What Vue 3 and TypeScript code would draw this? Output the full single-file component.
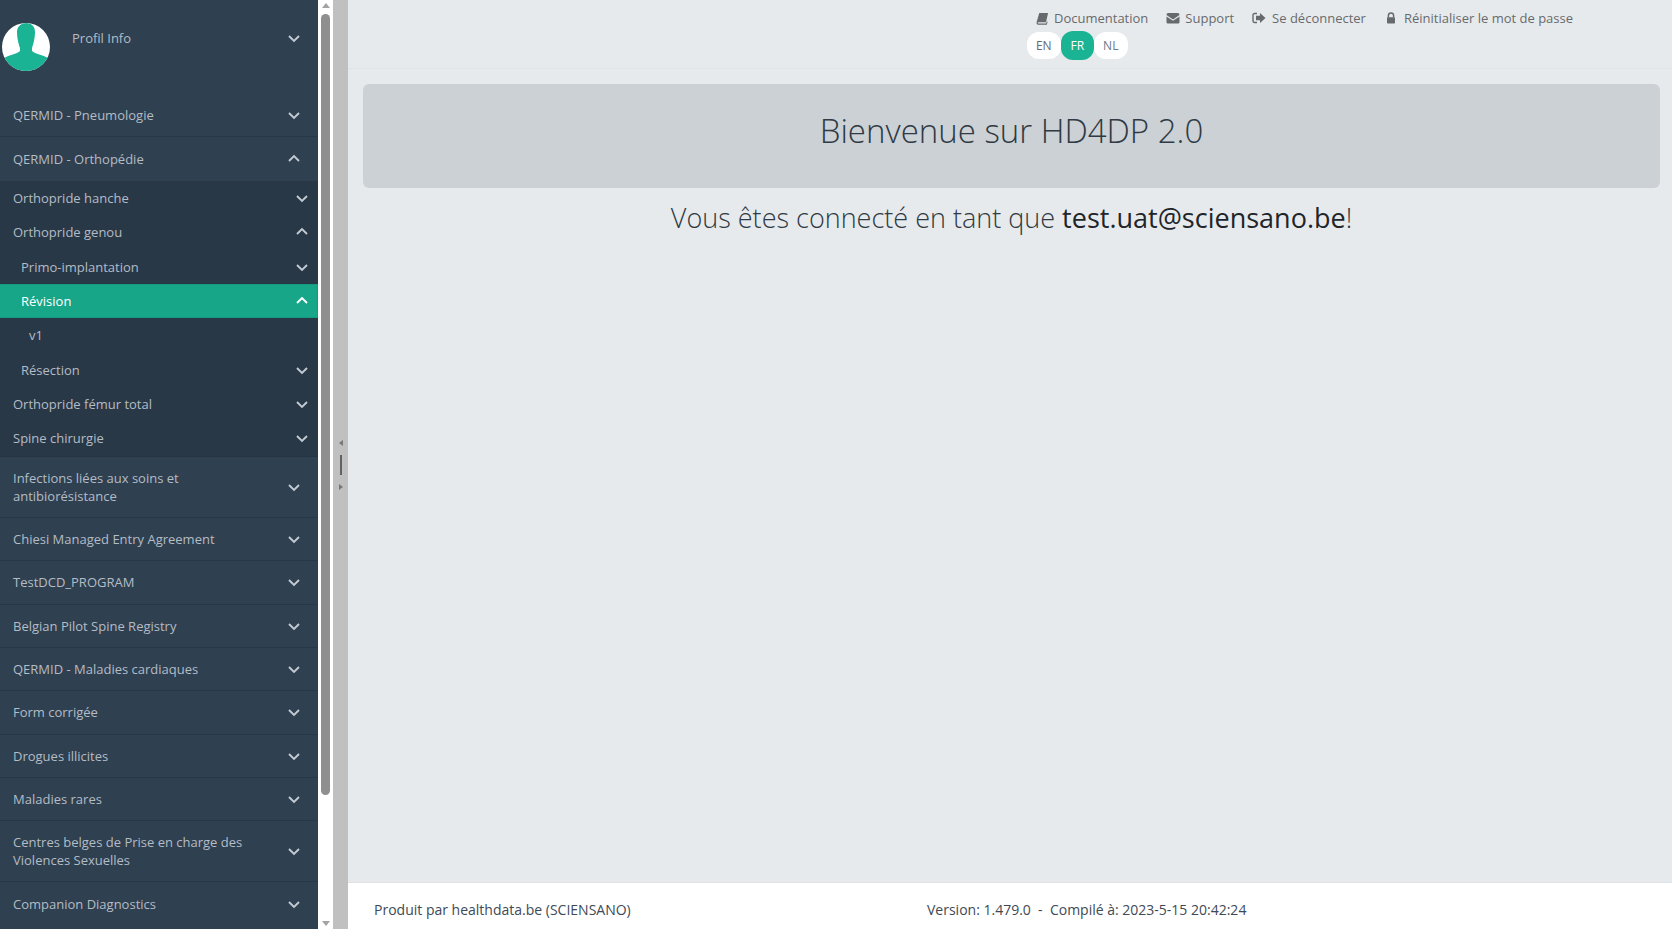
<script setup lang="ts">
type Item = { label: string; level: 0 | 1 | 2 | 3; icon?: 'down' | 'up'; active?: boolean; open?: boolean; last?: boolean }
const before: Item[] = [
  { label: 'QERMID - Pneumologie', level: 0, icon: 'down' },
  { label: 'QERMID - Orthopédie', level: 0, icon: 'up', open: true },
]
const sub: Item[] = [
  { label: 'Orthopride hanche', level: 1, icon: 'down' },
  { label: 'Orthopride genou', level: 1, icon: 'up' },
  { label: 'Primo-implantation', level: 2, icon: 'down' },
  { label: 'Révision', level: 2, icon: 'up', active: true },
  { label: 'v1', level: 3 },
  { label: 'Résection', level: 2, icon: 'down' },
  { label: 'Orthopride fémur total', level: 1, icon: 'down' },
  { label: 'Spine chirurgie', level: 1, icon: 'down' },
]
const after: string[] = [
  'Infections liées aux soins et antibiorésistance',
  'Chiesi Managed Entry Agreement',
  'TestDCD_PROGRAM',
  'Belgian Pilot Spine Registry',
  'QERMID - Maladies cardiaques',
  'Form corrigée',
  'Drogues illicites',
  'Maladies rares',
  'Centres belges de Prise en charge des Violences Sexuelles',
  'Companion Diagnostics',
]
const chevron = (dir?: string) => (dir === 'up' ? 'M2 9 L7 4 L12 9' : 'M2 5 L7 10 L12 5')
</script>

<template>
  <div class="page">
    <aside class="sidebar">
      <div class="profile">
        <svg class="avatar" viewBox="0 0 48 48" width="48" height="48">
          <circle cx="24" cy="24" r="24" fill="#fff" />
          <clipPath id="av"><circle cx="24" cy="24" r="24" /></clipPath>
          <g clip-path="url(#av)" fill="#1ab394">
            <path d="M15 9 C15 3 20 0 24 0 C29 0 33 3 33 9 C33 16 31 22 30 25 L30 28 C33 31 41 32 46 35 L48 48 L0 48 L2 35 C7 32 15 31 18 28 L18 25 C17 22 15 16 15 9 Z" />
          </g>
        </svg>
        <span class="profile-name">Profil Info</span>
        <svg class="chev top" viewBox="0 0 14 14" width="14" height="14"><path :d="chevron('down')" /></svg>
      </div>

      <nav class="menu">
        <a v-for="it in before" :key="it.label" class="top-item" :class="{ open: it.open }">
          <span class="label">{{ it.label }}</span>
          <svg class="chev top" viewBox="0 0 14 14" width="14" height="14"><path :d="chevron(it.icon)" /></svg>
        </a>
        <div class="sub">
          <a
            v-for="it in sub"
            :key="it.label"
            class="sub-item"
            :class="['lvl' + it.level, { active: it.active }]"
          >
            <span class="label">{{ it.label }}</span>
            <svg v-if="it.icon" class="chev" viewBox="0 0 14 14" width="14" height="14"><path :d="chevron(it.icon)" /></svg>
          </a>
        </div>
        <a v-for="label in after" :key="label" class="top-item">
          <span class="label">{{ label }}</span>
          <svg class="chev top" viewBox="0 0 14 14" width="14" height="14"><path :d="chevron('down')" /></svg>
        </a>
      </nav>
    </aside>

    <div class="scrollbar">
      <span class="arrow up"></span>
      <span class="thumb"></span>
      <span class="arrow down"></span>
    </div>

    <div class="splitter">
      <span class="tri left"></span>
      <span class="grip"></span>
      <span class="tri right"></span>
    </div>

    <main class="main">
      <header class="topbar">
        <div class="topbar-inner">
          <div class="links">
            <a class="link">
              <svg viewBox="0 0 14 14" width="13" height="13"><path d="M3.5 1 H13 L10.8 11 H2.6 C1.6 11 1.6 12.4 2.6 12.4 H11 L11.6 10.2 L12.6 10.6 L11.6 13.6 H2 C0.6 13.6 0.4 12 0.8 10.6 Z" fill="#676a6c" /></svg>
              Documentation
            </a>
            <a class="link">
              <svg viewBox="0 0 14 14" width="14" height="14"><path d="M0.5 4 C0.5 2.8 1.2 2 2.2 2 H11.8 C12.8 2 13.5 2.8 13.5 4 L7 8.4 Z M0.5 5.4 L7 9.8 L13.5 5.4 V11 C13.5 12 12.8 12.6 11.8 12.6 H2.2 C1.2 12.6 0.5 12 0.5 11 Z" fill="#676a6c" /></svg>
              Support
            </a>
            <a class="link nudge">
              <svg viewBox="0 0 14 14" width="14" height="14"><path d="M5 2.5 H2.4 C1.6 2.5 1 3.1 1 3.9 V10.1 C1 10.9 1.6 11.5 2.4 11.5 H5" fill="none" stroke="#676a6c" stroke-width="1.4" /><path d="M8 2 L13.5 7 L8 12 V9.2 H4 V4.8 H8 Z" fill="#676a6c" /></svg>
              Se déconnecter
            </a>
            <a class="link nudge">
              <svg viewBox="0 0 14 14" width="14" height="14"><path d="M4.4 6.4 V4.6 C4.4 3 5.5 2 7 2 C8.5 2 9.6 3 9.6 4.6 V6.4" fill="none" stroke="#676a6c" stroke-width="1.5" /><rect x="3" y="6.2" width="8" height="6.3" rx="0.8" fill="#676a6c" /></svg>
              Réinitialiser le mot de passe
            </a>
          </div>
          <div class="langs">
            <span class="lang">EN</span>
            <span class="lang on">FR</span>
            <span class="lang nl">NL</span>
          </div>
        </div>
      </header>

      <section class="content">
        <div class="jumbotron"><h1>Bienvenue sur HD4DP 2.0</h1></div>
        <h2>Vous êtes connecté en tant que <strong>test.uat@sciensano.be</strong>!</h2>
      </section>

      <footer class="footer">
        <span class="produced">Produit par healthdata.be (SCIENSANO)</span>
        <span>Version: 1.479.0 &nbsp;-&nbsp; Compilé à: 2023-5-15 20:42:24</span>
      </footer>
    </main>
  </div>
</template>

<style>
html, body { margin: 0; overflow: hidden; }
</style>

<style scoped>
.page {
  display: flex;
  height: 929px;
  overflow: hidden;
  font-family: "Open Sans", "Liberation Sans", sans-serif;
  font-size: 13px;
  color: #676a6c;
  background: #e7eaec;
}
.sidebar {
  width: 318px;
  flex: none;
  height: 929px;
  overflow: hidden;
  background: #2f4050;
  color: #b4bcc6;
}
.profile {
  display: flex;
  align-items: center;
  height: 94px;
  padding: 0 17px 0 2px;
  box-sizing: border-box;
  position: relative;
}
.avatar { flex: none; margin-top: -4px; margin-top: -1px; }
.profile-name { flex: 1; margin-left: 22px; margin-top: -18px; }
.profile .chev { margin-top: -18px; }
.chev {
  flex: none;
  fill: none;
  stroke: #c3cad2;
  stroke-width: 1.9;
}
.menu { display: flex; flex-direction: column; }
.top-item {
  display: flex;
  align-items: center;
  justify-content: space-between;
  padding: 12.17px 17px 12.16px 13px;
  line-height: 18px;
  border-bottom: 1px solid #293846;
}
.top-item.open { border-bottom: none; padding-bottom: 12.66px; padding-top: 12.66px; }
.top-item:last-child { border-bottom: none; }
.label { flex: 1; padding-right: 20px; }
.sub { background: #293846; border-bottom: 1px solid #263340; }
.sub-item {
  display: flex;
  align-items: center;
  padding: 8.2px 9px 8.2px 13px;
  line-height: 18px;
}
.sub-item.lvl2 { padding-left: 21px; }
.sub-item.lvl3 { padding-left: 29px; }
.sub-item.active {
  background: #18a689;
  color: #fff;
  border: 1px solid #149a7e;
  border-width: 1px 1px 1px 0;
  padding-top: 7.2px;
  padding-bottom: 7.2px;
  padding-right: 8px;
}
.sub-item.active .chev { stroke: #fff; }
.scrollbar {
  width: 15px;
  flex: none;
  background: #fff;
  display: flex;
  flex-direction: column;
  align-items: center;
}
.arrow { width: 0; height: 0; border-left: 4px solid transparent; border-right: 4px solid transparent; }
.arrow.up { margin-top: 3px; border-bottom: 5px solid #a3a3a3; }
.arrow.down { margin-top: auto; margin-bottom: 3px; border-top: 5px solid #a3a3a3; }
.thumb {
  width: 9px;
  height: 781px;
  margin-top: 6px;
  background: #8f8f8f;
  border-radius: 5px;
}
.splitter {
  width: 15px;
  flex: none;
  background: #c0c0c0;
  display: flex;
  flex-direction: column;
  align-items: center;
  justify-content: center;
  padding-top: 1px;
  box-sizing: border-box;
}
.grip { width: 2px; height: 20px; background: #5f6368; margin: 9px 0; }
.tri { width: 0; height: 0; border-top: 3px solid transparent; border-bottom: 3px solid transparent; }
.tri.left { border-right: 4px solid #777; }
.tri.right { border-left: 4px solid #777; }
.main {
  flex: 1;
  min-width: 0;
  display: flex;
  flex-direction: column;
}
.topbar {
  height: 69px;
  box-sizing: border-box;
  border-bottom: 1px solid #dfe3e6;
  display: flex;
  justify-content: flex-end;
  padding-right: 101px;
}
.topbar-inner { width: 544px; }
.links {
  display: flex;
  height: 32px;
  padding: 0 0 0 9px;
  align-items: center;
  gap: 18px;
  color: #676a6c;
  line-height: 18px;
  padding-top: 4px;
  box-sizing: border-box;
}
.link { display: inline-flex; align-items: center; gap: 5px; white-space: nowrap; }
.link.nudge { gap: 6px; }
.langs { display: flex; }
.lang {
  width: 33.5px;
  height: 27px;
  border-radius: 12px;
  background: #fff;
  display: flex;
  align-items: center;
  justify-content: center;
  font-size: 12px;
  color: #676a6c;
}
.lang.on { background: #1ab394; color: #fff; height: 29px; margin-top: -1px; }
.lang.nl { color: #6b7c8c; }
.content {
  flex: 1;
  padding: 15px 12px 0 15px;
  text-align: center;
}
.jumbotron {
  height: 104px;
  background: #ccd1d5;
  border-radius: 6px;
  box-sizing: border-box;
  padding-top: 24px;
}
h1 {
  margin: 0;
  font-size: 33px;
  line-height: 45px;
  font-weight: 300;
  color: #2f3a44;
}
h2 {
  margin: 12px 0 0;
  font-size: 27px;
  line-height: 36px;
  font-weight: 300;
  color: #2f3a44;
}
h2 strong { font-weight: 400; color: #212529; }
.footer {
  height: 47px;
  box-sizing: border-box;
  background: #fff;
  border-top: 1px solid #dfe3e6;
  display: flex;
  align-items: center;
  padding: 6px 0 0 26px;
  font-size: 14px;
  color: #404a56;
}
.produced { width: 553px; }
</style>
